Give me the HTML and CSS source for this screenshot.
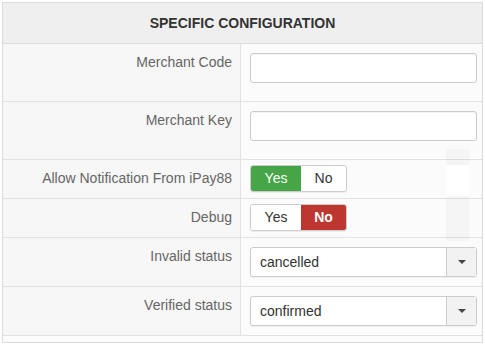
FILE: index.html
```html
<!DOCTYPE html>
<html>
<head>
    <meta name="viewport" content="width=device-width, initial-scale=1.0">
    <title>Specific Configuration</title>
    <link rel="stylesheet" href="styles.css">
</head>
<body>
    <div class="panel">
        <div class="panel-head">SPECIFIC CONFIGURATION</div>
        <div class="row">
            <div class="label">Merchant Code</div>
            <div class="field"><input type="text" class="text-input"></div>
        </div>
        <div class="row">
            <div class="label">Merchant Key</div>
            <div class="field"><input type="text" class="text-input"></div>
        </div>
        <div class="row row-toggle">
            <div class="label">Allow Notification From iPay88</div>
            <div class="field">
                <div class="toggle">
                    <span class="opt yes active">Yes</span>
                    <span class="opt no">No</span>
                </div>
            </div>
        </div>
        <div class="row row-toggle">
            <div class="label">Debug</div>
            <div class="field">
                <div class="toggle">
                    <span class="opt yes">Yes</span>
                    <span class="opt no active">No</span>
                </div>
            </div>
        </div>
        <div class="row row-select">
            <div class="label">Invalid status</div>
            <div class="field">
                <div class="select">
                    <span class="select-value">cancelled</span>
                    <span class="select-arrow"><span class="caret"></span></span>
                </div>
            </div>
        </div>
        <div class="row row-select">
            <div class="label">Verified status</div>
            <div class="field">
                <div class="select">
                    <span class="select-value">confirmed</span>
                    <span class="select-arrow"><span class="caret"></span></span>
                </div>
            </div>
        </div>
        <div class="panel-foot"></div>
        <div class="ghost"><div class="ghost-mid"></div></div>
    </div>
</body>
</html>
```

FILE: styles.css
```css
body {
    margin: 0;
    padding: 2px;
    font-family: "Liberation Sans", Arial, sans-serif;
    font-size: 14px;
    background: #ffffff;
}
.panel {
    position: relative;
    border: 1px solid #dcdcdc;
    background: #fbfbfb;
}
.panel-head {
    height: 40px;
    line-height: 40px;
    text-align: center;
    font-weight: bold;
    font-size: 14px;
    color: #333;
    background: #efefef;
    border-bottom: 1px solid #dddddd;
}
.row {
    display: grid;
    grid-template-columns: 238px 1fr;
    border-bottom: 1px solid #e2e2e2;
}
.label {
    background: #f7f7f7;
    border-right: 1px solid #e2e2e2;
    color: #666;
    text-align: right;
    padding: 9px 8px 0 0;
    line-height: 18px;
}
.field {
    padding: 9px 5px 8px 9px;
}
.text-input {
    display: block;
    box-sizing: border-box;
    width: 100%;
    height: 30px;
    margin: 0 0 10px;
    border: 1px solid #cccccc;
    border-radius: 3px;
    background: #fff;
    box-shadow: inset 0 1px 1px rgba(0, 0, 0, 0.05);
}
.row-toggle .field {
    padding: 5px 5px 6px 9px;
}
.toggle {
    display: inline-flex;
    height: 27px;
    border: 1px solid #cccccc;
    border-radius: 3px;
    overflow: hidden;
    box-sizing: border-box;
    box-shadow: 0 1px 1px rgba(0, 0, 0, 0.06);
}
.opt {
    width: 50px;
    line-height: 25px;
    text-align: center;
    font-size: 14px;
    color: #333;
    background: #fff;
}
.opt.no {
    width: 45px;
}
.yes.active {
    background: #46a546;
    color: #fff;
}
.no.active {
    background: #bd362f;
    color: #fff;
    font-weight: bold;
}
.row-select .field {
    padding: 9px 5px 9px 9px;
}
.row-select:last-of-type .field {
    padding-bottom: 8px;
}
.select {
    display: flex;
    height: 30px;
    box-sizing: border-box;
    border: 1px solid #cccccc;
    border-radius: 3px;
    background: #fff;
    box-shadow: 0 1px 1px rgba(0, 0, 0, 0.05);
}
.select-value {
    flex: 1;
    padding-left: 9px;
    line-height: 28px;
    font-size: 14px;
    color: #333;
}
.select-arrow {
    width: 29px;
    border-left: 1px solid #cccccc;
    background: #f2f2f2;
    display: flex;
    align-items: center;
    justify-content: center;
}
.caret {
    width: 0;
    height: 0;
    border-left: 4px solid transparent;
    border-right: 4px solid transparent;
    border-top: 4px solid #444;
}
.panel-foot {
    height: 6px;
    background: #fcfcfc;
}
.ghost {
    position: absolute;
    left: 443px;
    top: 146px;
    width: 23px;
    height: 92px;
    background: rgba(0, 0, 0, 0.025);
}
.ghost-mid {
    margin-top: 16px;
    height: 31px;
    background: #fff;
}
```
